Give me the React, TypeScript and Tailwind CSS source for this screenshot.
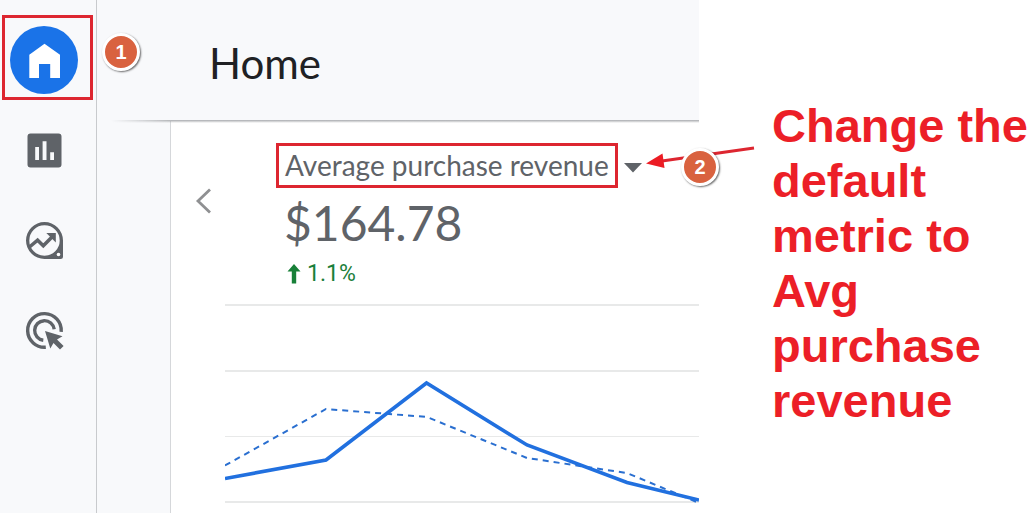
import type { ReactNode } from "react";

function Badge({ children, className }: { children: ReactNode; className: string }) {
  return (
    <span
      className={`absolute z-20 flex size-[38px] items-center justify-center rounded-full border-[3px] border-white bg-[#d9623f] font-['Liberation_Sans',sans-serif] text-[20px] font-bold leading-none text-white shadow-[1px_1px_2px_rgba(0,0,0,0.6)] ${className}`}
    >
      {children}
    </span>
  );
}

function HomeIcon() {
  return (
    <svg viewBox="0 0 68 68" className="size-[68px]" aria-hidden="true">
      <path fill="#fff" d="M34.5 17.7 50 28.7V52H40.2V38H29V52H19.3V28.7z" />
    </svg>
  );
}

function ReportsIcon() {
  return (
    <svg viewBox="0 0 40 40" className="size-10" fill="#5f6368" aria-hidden="true">
      <path
        fillRule="evenodd"
        d="M6.5 3.5h28a3 3 0 0 1 3 3v28a3 3 0 0 1-3 3h-28a3 3 0 0 1-3-3v-28a3 3 0 0 1 3-3zM11.2 17v13H15V17zM18.6 11.2V30h3.9V11.2zM26.2 22.3V30H30v-7.700z"
      />
    </svg>
  );
}

function ExploreIcon() {
  return (
    <svg viewBox="0 0 40 40" className="size-10" fill="#5f6368" aria-hidden="true">
      <path
        fillRule="evenodd"
        d="M20.5 2a18.5 18.5 0 0 0 0 37h16a2.5 2.5 0 0 0 2.5-2.5v-16A18.5 18.5 0 0 0 20.5 2zm0 3.3a15.2 15.2 0 1 1 0 30.4 15.2 15.2 0 0 1 0-30.4z"
      />
      <circle cx="34.5" cy="34.5" r="1.8" fill="#fff" />
      <path d="M5.5 27 13.6 20.2 19.3 25.8 29 16" fill="none" stroke="#5f6368" strokeWidth="3.5" />
      <path d="M22.3 13h9.5v9.5z" />
    </svg>
  );
}

function AdvertisingIcon() {
  return (
    <svg viewBox="0 0 40 40" className="size-10" fill="none" stroke="#5f6368" strokeWidth="3.4" aria-hidden="true">
      <path d="M37.2 21.8A16.8 16.8 0 1 0 21.8 37.2" />
      <path d="M30.2 19.3A9.8 9.8 0 1 0 19.3 30.2" />
      <path
        fill="#5f6368"
        stroke="none"
        d="M21 21 38.5 26.2 33 29.5 39.6 36 36 39.6 29.5 33.1 26.3 38.4z"
      />
    </svg>
  );
}

const links = [
  { label: "Reports", icon: <ReportsIcon /> },
  { label: "Explore", icon: <ExploreIcon /> },
  { label: "Advertising", icon: <AdvertisingIcon /> },
];

function Sidebar() {
  return (
    <nav className="relative w-[97px] shrink-0 border-r border-[#c8cacd] pl-[10px] pt-[26px]">
      <div className="absolute left-[2px] top-[15px] h-[85px] w-[91px] border-[3px] border-[#dd2630]" />
      <div className="flex flex-col gap-[22px]">
        <a href="#home" aria-label="Home" className="relative block size-[68px] rounded-full bg-[#1a73e8]">
          <HomeIcon />
        </a>
        {links.map((l) => (
          <a
            key={l.label}
            href={`#${l.label.toLowerCase()}`}
            aria-label={l.label}
            className="flex size-[68px] items-center justify-center"
          >
            {l.icon}
          </a>
        ))}
      </div>
      <Badge className="left-[102px] top-[33px]">1</Badge>
    </nav>
  );
}

function Chart() {
  return (
    <svg
      viewBox="0 0 474 209"
      preserveAspectRatio="none"
      className="block h-[209px] w-full"
      fill="none"
      role="img"
      aria-label="Average purchase revenue over time"
    >
      <path d="M0 1H474M0 67H474M0 198H474" stroke="#e8e9e9" strokeWidth="2" />
      <path d="M0 132.5H474" stroke="#e8e9e9" strokeWidth="1" />
      <path
        d="M0 161.5 101 105 202 113 302 154 402 169 474 199"
        stroke="#2a6fd0"
        strokeWidth="2"
        strokeDasharray="6 5"
      />
      <path d="M0 174.5 101 156 201.5 79 302 141 402 178.5 474 196" stroke="#2170df" strokeWidth="3.6" />
    </svg>
  );
}

function MetricPicker() {
  return (
    <div className="relative">
      <button
        type="button"
        aria-haspopup="listbox"
        className="flex items-center gap-[6px] text-[28px] leading-[39px] text-[#5f6368]"
      >
        <span className="block whitespace-nowrap border-[3px] border-[#dd2630] px-[6px]">
          Average purchase revenue
        </span>
        <svg viewBox="0 0 18 10" className="mt-[4px] h-[10px] w-[18px]" fill="#5f6368" aria-hidden="true">
          <path d="M0 0h18L9 9.5z" />
        </svg>
      </button>
      <svg
        viewBox="0 0 120 40"
        className="absolute left-[364px] top-0 z-10 h-10 w-[120px]"
        aria-hidden="true"
      >
        <path d="M22 18 114 5" stroke="#dd2630" strokeWidth="3" />
        <path d="M6 20.5 22.5 10.5 24.5 25z" fill="#ec1c24" />
      </svg>
      <Badge className="left-[405px] top-[5px]">2</Badge>
    </div>
  );
}

export default function App() {
  return (
    <div className="flex min-h-screen bg-white font-['Lato',sans-serif]">
      <div className="flex min-w-0 flex-1 bg-[#f8f9fb]">
        <Sidebar />
        <main className="flex min-w-0 flex-1 flex-col">
          <header className="relative flex h-[121px] items-center pb-[3px] pl-[112px]">
            <h1 className="pt-[8px] text-[42px] leading-[50px] text-[#202124]">Home</h1>
            <div className="absolute left-[14px] right-0 top-[120px] h-[3px] bg-linear-to-b from-[#a9abae] to-transparent [mask-image:linear-gradient(to_right,transparent,black_60px)]" />
          </header>
          <section className="ml-[73px] flex flex-1 border-l border-[#d5d7da] bg-white">
            <div className="w-[54px] shrink-0 pl-[24px] pt-[66px]">
              <button type="button" aria-label="Previous" className="block">
                <svg viewBox="0 0 18 28" className="h-7 w-[18px]" fill="none" aria-hidden="true">
                  <path d="M15 2.5 3 14 15 25.5" stroke="#8f9092" strokeWidth="2.8" />
                </svg>
              </button>
            </div>
            <div className="min-w-0 flex-1">
              <div className="h-[183px] pl-[51px] pt-[22px]">
                <MetricPicker />
                <p className="pl-[8px] pt-[5px] text-[48px] leading-[60px] text-[#5f6368]">$164.78</p>
                <p className="flex items-center gap-[6px] pl-[11px] font-['Roboto',sans-serif] text-[23px] leading-[42px] text-[#1b7e3a]">
                  <svg viewBox="0 0 14 20" className="h-5 w-[14px]" aria-hidden="true">
                    <path fill="#188038" d="M7 0 13.5 7.5H9.2V19.5H4.800V7.5H.5z" />
                  </svg>
                  1.1%
                </p>
              </div>
              <Chart />
            </div>
          </section>
        </main>
      </div>
      <aside className="w-[330px] shrink-0 pl-[73px] pt-[98px]">
        <p className="font-['Liberation_Sans',sans-serif] text-[47px] font-bold leading-[55px] text-[#ec1f27]">
          Change the default metric to Avg purchase revenue
        </p>
      </aside>
    </div>
  );
}
